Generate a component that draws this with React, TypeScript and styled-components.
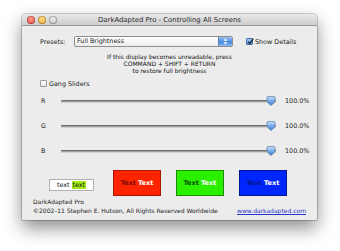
import React from "react";
import styled, { createGlobalStyle } from "styled-components";

const Global = createGlobalStyle`
  html, body { margin: 0; padding: 0; background: #ffffff; }
  body { width: 340px; height: 251px; overflow: hidden; font-family: "DejaVu Sans", "Liberation Sans", sans-serif; color: #1a1a1a; }
`;

const Window = styled.div`
  margin: 14px 0 0 22px;
  width: 295px;
  height: 206px;
  display: flex;
  flex-direction: column;
  background: #ececec;
  border-radius: 4px 4px 1px 1px;
  box-shadow: 0 8px 18px rgba(0, 0, 0, 0.45), 0 0 0 1px rgba(0, 0, 0, 0.18);
  overflow: hidden;
`;

const TitleBar = styled.div`
  height: 11px;
  flex: none;
  display: flex;
  align-items: center;
  position: relative;
  background: linear-gradient(#e9e9e9, #cdcdcd);
  border-bottom: 1px solid #9a9a9a;
`;

const Lights = styled.div`
  display: flex;
  gap: 3px;
  padding-left: 5px;
`;

const Light = styled.span<{ $c: string; $d: string }>`
  width: 8px;
  height: 8px;
  border-radius: 50%;
  background: radial-gradient(circle at 50% 35%, ${(p) => p.$c} 20%, ${(p) => p.$d} 100%);
  box-shadow: inset 0 0 0 0.5px rgba(0, 0, 0, 0.35);
`;

const Title = styled.div`
  position: absolute;
  left: 0;
  right: 0;
  top: 0;
  bottom: 0;
  display: flex;
  align-items: center;
  justify-content: center;
  font-size: 6.9px;
  color: #2a2a2a;
  pointer-events: none;
`;

const Body = styled.div`
  flex: 1;
  display: flex;
  flex-direction: column;
  font-size: 6.4px;
  color: #1a1a1a;
`;

const PresetsRow = styled.div`
  display: flex;
  align-items: center;
  height: 11px;
  margin-top: 10px;
  padding-left: 18px;
`;

const Label = styled.span`
  width: 34px;
  flex: none;
`;

const Popup = styled.div`
  width: 159px;
  height: 11px;
  box-sizing: border-box;
  display: flex;
  border: 1px solid #8e8e8e;
  border-radius: 2px;
  background: linear-gradient(#ffffff, #ececec);
  overflow: hidden;
`;

const PopupText = styled.span`
  flex: 1;
  padding-left: 2px;
  line-height: 9px;
  font-weight: 500;
`;

const PopupArrows = styled.span`
  width: 13px;
  display: flex;
  align-items: center;
  justify-content: center;
  background: linear-gradient(#9fc3f1, #4f8fe0 50%, #3b7fd8 52%, #8cc0f8);
  border-left: 1px solid #5f7fae;
`;

const Check = styled.span<{ $on?: boolean }>`
  width: 7px;
  height: 7px;
  box-sizing: border-box;
  flex: none;
  display: inline-flex;
  align-items: center;
  justify-content: center;
  border: 1px solid ${(p) => (p.$on ? "#4b6f9f" : "#9a9a9a")};
  border-radius: 1px;
  background: ${(p) => (p.$on ? "linear-gradient(#a9cdf6, #4e8ee0)" : "linear-gradient(#ffffff, #e6e6e6)")};
  position: relative;
`;

const CheckMark = styled.svg`
  position: absolute;
  left: 0;
  top: -1px;
  width: 7px;
  height: 7px;
`;

const CheckRow = styled.label<{ $ml: number }>`
  display: flex;
  align-items: center;
  gap: 2px;
  margin-left: ${(p) => p.$ml}px;
`;

const Info = styled.div`
  margin-top: 6px;
  text-align: center;
  line-height: 7px;
  font-size: 6px;
  color: #111111;
`;

const GangRow = styled.div`
  display: flex;
  align-items: center;
  height: 7px;
  margin-top: 6px;
  padding-left: 18px;
`;

const Sliders = styled.div`
  display: flex;
  flex-direction: column;
  gap: 15px;
  margin-top: 9px;
`;

const SliderRow = styled.div`
  display: flex;
  align-items: center;
  height: 10px;
  padding-left: 19px;
`;

const SliderLabel = styled.span`
  width: 20px;
  flex: none;
`;

const Track = styled.div`
  width: 215px;
  height: 10px;
  position: relative;
  display: flex;
  align-items: center;
`;

const Groove = styled.div`
  width: 100%;
  height: 3px;
  box-sizing: border-box;
  border-top: 1px solid #6f6f6f;
  border-bottom: 1px solid #d0d0d0;
  background: #a0a0a0;
  border-radius: 1px;
`;

const Thumb = styled.svg`
  position: absolute;
  top: 0;
  width: 10px;
  height: 10px;
`;

const Value = styled.span`
  margin-left: 9px;
`;

const Samples = styled.div`
  display: flex;
  align-items: center;
  margin-top: 14px;
  padding-left: 27px;
  height: 26px;
`;

const WhiteSample = styled.div`
  width: 45px;
  height: 12px;
  box-sizing: border-box;
  margin-top: 3px;
  margin-right: 19px;
  display: flex;
  align-items: center;
  justify-content: center;
  gap: 2px;
  background: #fff;
  border: 1px solid #b0b0b0;
  font-size: 6.4px;
  color: #111;
`;

const Hi = styled.span`
  background: #a2ea14;
  padding: 0 1px;
`;

const ColorBox = styled.div<{ $bg: string; $bd: string }>`
  width: 48px;
  height: 26px;
  box-sizing: border-box;
  margin-right: 15px;
  display: flex;
  align-items: center;
  justify-content: center;
  gap: 2px;
  background: ${(p) => p.$bg};
  border: 1px solid ${(p) => p.$bd};
  font-size: 6.6px;
  font-weight: bold;
`;

const Dim = styled.span<{ $c: string }>`
  color: ${(p) => p.$c};
`;

const Bright = styled.span`
  color: #fff;
`;

const Footer = styled.div`
  display: flex;
  justify-content: space-between;
  align-items: flex-end;
  margin-top: 1px;
  padding: 0 11px;
  font-size: 6px;
  line-height: 9px;
`;

const Link = styled.a`
  color: #2936c8;
  text-decoration: underline;
`;

const sliders = [
  { name: "R", value: 100 },
  { name: "G", value: 100 },
  { name: "B", value: 100 },
];

export default function App() {
  return (
    <>
      <Global />
      <Window>
        <TitleBar>
          <Lights>
            <Light $c="#ff8d80" $d="#d8322a" />
            <Light $c="#ffd27a" $d="#e0931d" />
            <Light $c="#e6e6e6" $d="#a9a9a9" />
          </Lights>
          <Title>DarkAdapted Pro - Controlling All Screens</Title>
        </TitleBar>
        <Body>
          <PresetsRow>
            <Label>Presets:</Label>
            <Popup>
              <PopupText>Full Brightness</PopupText>
              <PopupArrows>
                <svg width="5" height="7" viewBox="0 0 5 7">
                  <path d="M0.5 2.8 L2.5 0.6 L4.5 2.8 Z M0.5 4.2 L2.5 6.4 L4.5 4.2 Z" fill="#fff" />
                </svg>
              </PopupArrows>
            </Popup>
            <CheckRow $ml={13}>
              <Check $on>
                <CheckMark viewBox="0 0 7 7">
                  <path d="M1.2 3.6 L2.9 5.4 L6.3 0.6" fill="none" stroke="#1d2a3a" strokeWidth="1.3" />
                </CheckMark>
              </Check>
              <span>Show Details</span>
            </CheckRow>
          </PresetsRow>
          <Info>
            If this display becomes unreadable, press
            <br />
            COMMAND + SHIFT + RETURN
            <br />
            to restore full brightness
          </Info>
          <GangRow>
            <CheckRow $ml={0}>
              <Check />
              <span>Gang Sliders</span>
            </CheckRow>
          </GangRow>
          <Sliders>
            {sliders.map((s) => (
              <SliderRow key={s.name}>
                <SliderLabel>{s.name}</SliderLabel>
                <Track>
                  <Groove />
                  <Thumb viewBox="0 0 10 10" style={{ left: `calc(${s.value}% - ${(s.value / 100) * 10}px)` }}>
                    <defs>
                      <linearGradient id={`tg${s.name}`} x1="0" y1="0" x2="0" y2="1">
                        <stop offset="0" stopColor="#d6e6fa" />
                        <stop offset="0.45" stopColor="#7eaee8" />
                        <stop offset="1" stopColor="#3f7fd6" />
                      </linearGradient>
                    </defs>
                    <path
                      d="M1 1.6 Q1 0.6 2 0.6 H8 Q9 0.6 9 1.6 V5 Q9 6.4 5 9.4 Q1 6.4 1 5 Z"
                      fill={`url(#tg${s.name})`}
                      stroke="#5b7eaa"
                      strokeWidth="0.8"
                    />
                  </Thumb>
                </Track>
                <Value>{s.value.toFixed(1)}%</Value>
              </SliderRow>
            ))}
          </Sliders>
          <Samples>
            <WhiteSample>
              <span>text</span>
              <Hi>text</Hi>
            </WhiteSample>
            <ColorBox $bg="#ff2400" $bd="#a81800">
              <Dim $c="#7a0800">Text</Dim>
              <Bright>Text</Bright>
            </ColorBox>
            <ColorBox $bg="#2af000" $bd="#1c8f00">
              <Dim $c="#0b5200">Text</Dim>
              <Bright>Text</Bright>
            </ColorBox>
            <ColorBox $bg="#0026ff" $bd="#001590">
              <Dim $c="#00168a">Text</Dim>
              <Bright>Text</Bright>
            </ColorBox>
          </Samples>
          <Footer>
            <div>
              DarkAdapted Pro
              <br />
              ©2002–11 Stephen E. Hutson, All Rights Reserved Worldwide
            </div>
            <Link href="#">www.darkadapted.com</Link>
          </Footer>
        </Body>
      </Window>
    </>
  );
}
